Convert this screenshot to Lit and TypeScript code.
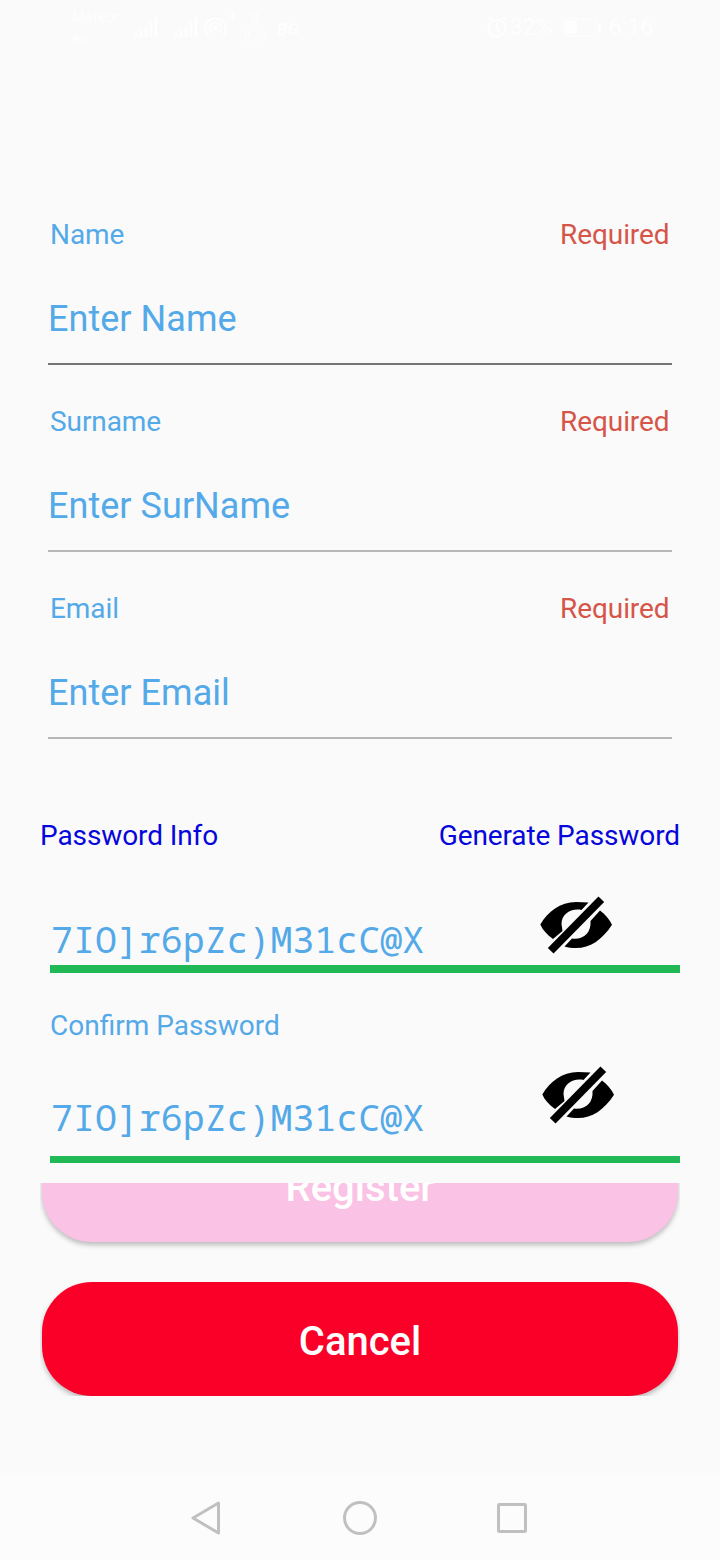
import { LitElement, html, css } from "lit";
import { customElement, property } from "lit/decorators.js";

@customElement("status-bar")
class StatusBar extends LitElement {
  static styles = css`
    :host { display: flex; height: 60px; padding: 0 67px 0 72px; justify-content: space-between; color: #fefefe; font-size: 15px; }
    .group { display: flex; align-items: flex-start; }
    .carrier { width: 62px; line-height: 22px; padding-top: 6px; }
    .rate { width: 28px; text-align: center; font-size: 14px; line-height: 18px; padding-top: 9px; margin-left: 3px; }
    .tag { font-weight: 700; font-style: italic; font-size: 17px; line-height: 20px; padding: 19px 0 0 8px; }
    .big { font-size: 23px; line-height: 26px; padding-top: 15px; }
    .percent { width: 50px; }
    .clock { padding-left: 7px; }
    svg { display: block; fill: none; stroke: #fefefe; stroke-width: 2; }
    .solid { fill: #fefefe; stroke: none; }
  `;
  render() {
    return html`
      <div class="group">
        <div class="carrier">Meteor<br />eir</div>
        <svg width="104" height="60" viewBox="134 0 104 60">
          <path stroke-width="3" d="M136 37v-4M141 37v-7M146 37v-11M151 37v-15M156 37v-20M176 37v-4M181 37v-7M186 37v-11M191 37v-15M196 37v-20" />
          <path d="M208 36a10.500 10.500 0 1 1 15 0M212 32a5.500 5.500 0 1 1 7 0" />
          <circle class="solid" cx="215.500" cy="28" r="2.500" />
          <path d="M230 14l3-2v9" stroke-width="1.500" />
        </svg>
        <div class="rate">0<br />K/s</div>
        <div class="tag">BG</div>
      </div>
      <div class="group">
        <svg width="24" height="60" viewBox="487 0 24 60">
          <circle cx="498" cy="28" r="8.500" /><path d="M498 22v6l3 4M489 20l4-3M507 20l-4-3" />
        </svg>
        <div class="big percent">32%</div>
        <svg width="42" height="60" viewBox="559 0 42 60">
          <rect x="562" y="19" width="33" height="17" rx="2" stroke-width="1" />
          <path class="solid" d="M564 21h12v13h-12zM597 24h3v8h-3z" />
        </svg>
        <div class="big clock">6:16</div>
      </div>
    `;
  }
}

@customElement("form-field")
class FormField extends LitElement {
  @property() label = "";
  @property() hint = "";
  @property({ type: Boolean }) active = false;
  static styles = css`
    :host { display: block; height: 187px; }
    .head { display: flex; justify-content: space-between; padding: 0 50.500px 0 50px; font-size: 28px; line-height: 38px; letter-spacing: -0.080px; color: #54a9e8; }
    .required { color: #d65549; }
    .input { margin: 41px 48px 0; height: 70px; box-sizing: border-box; border-bottom: 2px solid #b7b7b7; font-size: 36px; line-height: 48px; letter-spacing: 0.040px; color: #54a9e8; }
    .focus { border-color: #757575; }
  `;
  render() {
    return html`
      <div class="head"><span>${this.label}</span><span class="required">Required</span></div>
      <div class="input ${this.active ? "focus" : ""}">${this.hint}</div>
    `;
  }
}

@customElement("password-row")
class PasswordRow extends LitElement {
  @property() value = "";
  static styles = css`
    :host { display: flex; justify-content: space-between; }
    .value { padding-top: var(--drop, 0); font: 36.600px/48px "Droid Sans Mono", "Noto Sans Mono", "DejaVu Sans Mono", monospace; color: #54a9e8; }
    svg { display: block; overflow: visible; }
  `;
  render() {
    return html`
      <span class="value">${this.value}</span>
      <svg width="72" height="58" viewBox="0 0 72 58">
        <path d="M.3 28.500C8 15.500 20 6 36 6L48.500 6.500L41.500 14C31 12 21.500 18 21.500 28L22.500 35L13 43C7 38.500 3 34.500 .3 28.500z" />
        <path d="M60 14.500C65 18.500 69.500 23 72 28.700C62 44 50 52 36 52C32 52 28 51.500 24.500 50.500L32 42.500C43 44 51.500 37 50.500 25z" />
        <path d="M10.700 54.700L61.300 3.300" stroke="#000" stroke-width="8" />
      </svg>
    `;
  }
}

@customElement("app-root")
class AppRoot extends LitElement {
  static styles = css`
    :host { display: flex; flex-direction: column; height: 1560px; overflow: hidden; background: #fafafa; font-family: Roboto, sans-serif; }
    .fields { padding-top: 156px; height: 561px; }
    .links { display: flex; justify-content: space-between; margin-top: 40px; padding: 0 40px; font-size: 28px; line-height: 38px; letter-spacing: -0.1px; color: #0606dc; }
    .first { --drop: 19px; padding: 0 108px 0 51px; margin-top: 41px; height: 69px; }
    .second { --drop: 27px; padding: 0 106px 0 51px; margin-top: 21px; height: 90px; }
    .bar { flex: none; margin: 0 40px 0 50px; height: 8px; background: #21b856; }
    .thin { height: 7px; }
    .confirm { padding-left: 50px; margin-top: 34px; font-size: 28px; line-height: 38px; color: #54a9e8; }
    .window { flex: none; height: 84px; margin: 20px 40px 0; padding: 0 2px; overflow: hidden; display: flex; flex-direction: column; }
    .button { flex: none; height: 114px; border-radius: 50px; color: #fff; font-weight: 500; font-size: 40px; line-height: 120px; text-align: center; box-shadow: 0 3px 5px rgba(0, 0, 0, 0.25); }
    .register { margin-top: -55px; background: #fac2e4; }
    .tail { margin: 15px 40px 0; height: 114px; padding: 0 2px; overflow: hidden; }
    .cancel { background: #fa0028; }
    .nav { flex: none; margin-top: auto; height: 85px; background: #fcfcfc; display: flex; justify-content: center; }
    .nav svg { display: block; fill: none; stroke: #c0c0c0; stroke-width: 3; stroke-linejoin: round; }
  `;
  render() {
    return html`
      <status-bar></status-bar>
      <div class="fields">
        <form-field label="Name" hint="Enter Name" active></form-field>
        <form-field label="Surname" hint="Enter SurName"></form-field>
        <form-field label="Email" hint="Enter Email"></form-field>
      </div>
      <div class="links"><span>Password Info</span><span>Generate Password</span></div>
      <password-row class="first" value="7IO]r6pZc)M31cC@X"></password-row>
      <div class="bar"></div>
      <div class="confirm">Confirm Password</div>
      <password-row class="second" value="7IO]r6pZc)M31cC@X"></password-row>
      <div class="bar thin"></div>
      <div class="window"><div class="button register">Register</div></div>
      <div class="tail"><div class="button cancel">Cancel</div></div>
      <div class="nav">
        <svg width="720" height="85" viewBox="0 1475 720 85">
          <path d="M193 1518L218.500 1503V1533Z" />
          <circle cx="360" cy="1518" r="15.500" />
          <rect x="498.500" y="1504.500" width="27" height="27" rx="1" />
        </svg>
      </div>
    `;
  }
}
